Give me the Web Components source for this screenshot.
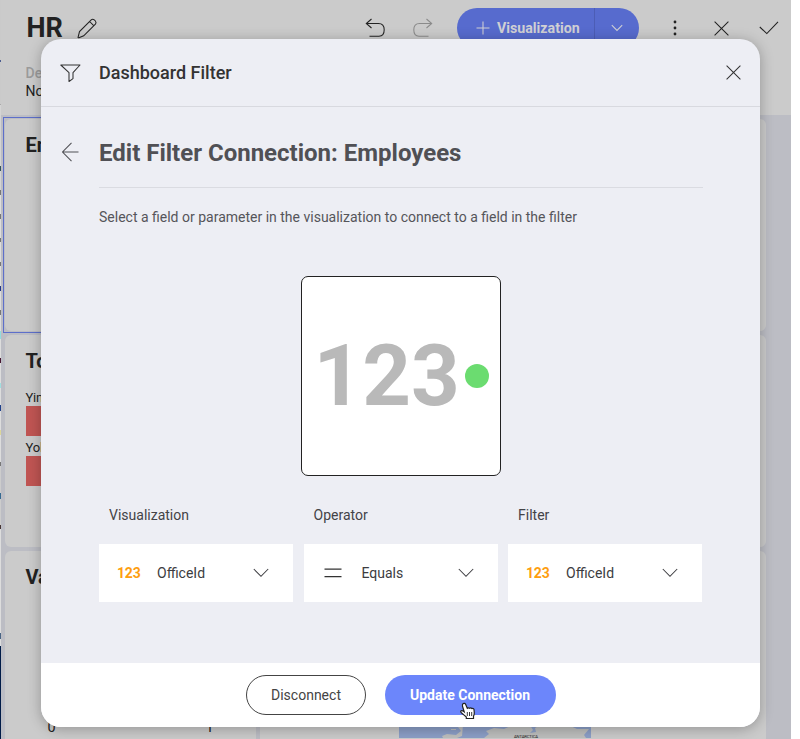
<!DOCTYPE html>
<html lang="en">
<head>
<meta charset="utf-8">
<title>Dashboard Filter</title>
<style>
html,body{margin:0;padding:0;width:800px;height:739px;overflow:hidden;background:#fff;font-family:Roboto,"Liberation Sans",sans-serif}
</style>
</head>
<body>
<hr-app></hr-app>
<script>
const define = (name, html, init) => {
  const t = document.createElement('template');
  t.innerHTML = html;
  customElements.define(name, class extends HTMLElement {
    constructor() {
      super();
      this.attachShadow({mode: 'open'}).append(t.content.cloneNode(true));
    }
    connectedCallback() { if (init) init(this, this.shadowRoot); }
  });
};

// Line icons: [width, height, markup]
const ICONS = {
  pencil: [20, 21, '<path d="M1 19.600 2.500 13.600 14.200 1.800Q15.600.6 17.300 1.900L18.400 3Q19.700 4.600 18.400 6.100L6.700 17.800 2.500 19.500Q1.300 20.100 1 19.600ZM12.600 3.500 16.700 7.700"/>'],
  undo: [21, 20, '<path d="M6.500 1 1.300 5.500 6.500 10M1.300 5.500H13.500Q19.200 5.500 19.200 11.800 19.200 18.200 14 18.200H4.500"/>'],
  redo: [21, 20, '<path d="M14.500 1 19.700 5.500 14.500 10M19.700 5.500H7.500Q1.800 5.500 1.800 11.800 1.800 18.200 7 18.200H16.500"/>'],
  plus: [14, 14, '<path d="M7 .5V13.500M.5 7H13.500"/>'],
  smalldown: [12, 8, '<path d="M.8 1.200 6 6.400 11.200 1.200"/>'],
  down: [16, 10, '<path d="M.8 1 8 8.300 15.200 1"/>'],
  dots: [4, 16, '<g fill="currentColor" stroke="none"><circle cx="2" cy="2" r="1.400"/><circle cx="2" cy="8" r="1.400"/><circle cx="2" cy="14" r="1.400"/></g>'],
  close: [15, 15, '<path d="M.6.6 14.400 14.400M14.400.6.6 14.400"/>'],
  check: [20, 14, '<path d="M.8 6 7.800 12.600 19 .8"/>'],
  funnel: [22, 20, '<path d="M.8 2H20L13 9.600V15.600L9 18.500V9.600Z" stroke-linejoin="round"/>'],
  back: [18, 20, '<path d="M10.500.8 1.500 10 10.500 19.200M1.500 10H17.500"/>'],
  equals: [18, 10, '<path d="M.5 1.200H17.500M.5 8.700H17.500" stroke-width="1.300"/>'],
  hand: [15, 17, '<path d="M4.200 1.600Q5.900.8 6.700 2.500L8.300 6.300Q9.500 5.300 10.700 6.300 11.900 5.500 12.900 6.600 14.500 6 15 7.500L15.300 11Q15.300 12.800 14.500 14.300V16.500H7.300V15Q5 13 3.200 11.500.8 9.600 2.200 8.700 3.200 8.200 5.200 9.800L3.500 4.300Q3.100 2.300 4.200 1.600Z" fill="#fff" stroke="#222" stroke-width="1.200"/><path d="M8.300 10V14M10.500 10V14M12.700 10V14" stroke="#222" stroke-width=".9"/>']
};
define('line-icon', `<style>:host{display:block;flex:none}svg{display:block;overflow:visible}</style>`, (el, root) => {
  const [w, h, body] = ICONS[el.getAttribute('name')];
  root.querySelector('svg')?.remove();
  root.append(document.createRange().createContextualFragment(
    `<svg width="${w}" height="${h}" viewBox="0 0 ${w} ${h}" fill="none" stroke="currentColor" stroke-width="1.050">${body}</svg>`));
});

define('tool-bar', `<style>
:host{display:grid;grid-template-columns:92px 1fr;padding:0 12px 0 25.500px;box-sizing:border-box;background:#cbcbcb;color:#222;height:115px}
.left{padding-top:12px}
.name{display:flex;align-items:center;gap:14px;height:32px}
h1{margin:0;font-size:27px;line-height:32px;font-weight:700}
.desc{margin:20px 0 0 -1px;font-size:14px;line-height:18px;font-weight:500;color:#9b9b9b}
.none{margin-left:-1px;font-size:14px;line-height:19px;color:#222}
.tools{display:flex;justify-content:flex-end;height:56px;align-items:center}
.add{display:flex;align-items:center;height:40px;width:182px;border-radius:20px;background:#576bce;color:#d0d0d4;font-weight:700;font-size:14.200px;margin:0 34px 0 24.500px}
.main{display:flex;align-items:center;width:138px;height:40px;padding-left:19px;box-sizing:border-box;gap:7px;border-right:1px solid #4c5db5}
.drop{flex:1;display:flex;justify-content:center}
.redo{color:#8b8b8b;margin-left:26px}
.x{margin:0 30px 0 37px}
</style>
<div class="left"><div class="name"><h1>HR</h1><line-icon name="pencil"></line-icon></div>
<div class="desc">De</div><div class="none">No</div></div>
<div class="tools"><line-icon name="undo"></line-icon><line-icon class="redo" name="redo"></line-icon>
<div class="add"><div class="main"><line-icon name="plus"></line-icon><span>Visualization</span></div><div class="drop"><line-icon name="smalldown"></line-icon></div></div>
<line-icon name="dots"></line-icon><line-icon class="x" name="close"></line-icon><line-icon name="check"></line-icon></div>`);

define('widget-card', `<style>
:host{display:block;background:#cbcbcb;border-radius:6px;box-sizing:border-box;padding:14px 0 0 20.500px;color:#222;min-width:0;overflow:hidden}
:host([selected]){position:relative;overflow:visible}
:host([selected])::after{content:"";position:absolute;left:-2px;top:-2px;bottom:-2px;width:600px;box-sizing:border-box;border:1px solid #5d6fca}
h2{margin:0;font-size:20px;line-height:24px;font-weight:700}
</style><h2></h2><slot></slot>`, (el, root) => { root.querySelector('h2').textContent = el.getAttribute('label') || ''; });

define('bar-row', `<style>
:host{display:block;font-size:13px;line-height:24px;height:50px;color:#222;letter-spacing:-.2px}
.text{height:20px}
.bar{height:30px;width:60px;margin-left:.5px;background:#c05553}
</style><div class="text"><slot></slot></div><div class="bar"></div>`);

define('dash-board', `<style>
:host{display:grid;grid-template:212px 212px 200px / 251px 506px;gap:4px;padding:4px 0 0 4px;background:#bcbdc4;height:624px;box-sizing:border-box}
.wide{grid-column:1/3}
.bars{padding-top:13px}
.nums{display:flex;padding:129px 0 0 22px;font-size:14.500px;line-height:20px}
.nums span{flex:none;width:158px}
.map{padding:0}
.map svg{display:block;margin:148px 0 0 139px}
</style>
<widget-card class="wide" label="En" selected></widget-card>
<widget-card class="wide" label="To"><div class="bars"><bar-row>Yin</bar-row><bar-row>Yol</bar-row></div></widget-card>
<widget-card label="Va"><div class="nums"><span>0</span><span>1</span></div></widget-card>
<widget-card class="map"><svg width="192" height="39" viewBox="0 0 192 39"><path fill="#8c9fc7" d="M0 0H192V39H0Z"/>
<path fill="#bebfbe" d="M43 37 48 35 57 36 62 32 59 28 64 26 63 37 58 39H44ZM52 30H57V31H52ZM85 39 90 35 87 32 95 29 105 30 114 26 131 26 134 31 131 34 137 33 136 29 145 24H165L178 30 190 30 185 36 187 39Z"/>
<text x="115" y="38.500" font-size="4.200" font-family="Roboto" textLength="24" fill="#222">ANTARCTICA</text></svg></widget-card>`);

define('pill-button', `<style>
:host{display:flex;align-items:center;justify-content:center;height:40px;width:120px;box-sizing:border-box;border-radius:20px;border:1px solid #444;font-size:14px;color:#444;position:relative;padding-top:1px}
:host([primary]){width:171px;background:#6c86fb;border:0;color:#fff;font-weight:700;padding-right:1px}
</style><slot></slot>`);

define('pick-field', `<style>
:host{display:grid;grid-template-rows:49px 58px}
.label{font-size:14px;line-height:20px;padding:10px 0 0 10px;color:#434347}
.box{background:#fff;display:grid;grid-template-columns:58px 1fr auto;align-items:center;padding-right:24px;color:#3c3c40;font-size:14px}
.mark{padding-left:18px;font-weight:700;color:#fe9e10;letter-spacing:-.2px}
.mark line-icon{color:#333;margin-left:2px}
</style><div class="label"></div><div class="box"><div class="mark"></div><slot></slot><line-icon name="down"></line-icon></div>`,
(el, root) => {
  root.querySelector('.label').textContent = el.getAttribute('label');
  root.querySelector('.mark').innerHTML = el.hasAttribute('equals') ? '<line-icon name="equals"></line-icon>' : '123';
});

define('type-preview', `<style>
:host{display:flex;align-items:center;width:200px;height:200px;box-sizing:border-box;border:1px solid #222;border-radius:7px;background:#fff;padding-left:12px}
span{font-size:85px;line-height:100px;font-weight:700;color:#b9b9b9;width:151px}
i{display:block;width:24px;height:24px;border-radius:50%;background:#6bdc70}
</style><span>123</span><i></i>`);

define('filter-dialog', `<style>
:host{display:grid;grid-template-rows:68px 1fr 64.500px;background:#edeef4;border-radius:20px;overflow:hidden;box-shadow:0 2px 14px rgba(0,0,0,.28);color:#333}
header{display:grid;grid-template-columns:58px 1fr auto;align-items:center;border-bottom:1px solid #d8d9df;padding:0 19px 0 0;box-sizing:border-box}
header line-icon,.head line-icon{justify-self:start;margin-left:19px}
header b{font-size:18px;font-weight:500}
main{display:flex;flex-direction:column}
.head{display:grid;grid-template-columns:58px 1fr;align-items:center;height:30px;padding-top:30px;color:#505055}
.head line-icon{margin-left:19.500px}
h2{margin:1px 0 -1px;font-size:24px;font-weight:700;line-height:30px}
.inner{margin:20px 57px 0 58px;border-top:1px solid #dadbe1;flex:1;display:flex;flex-direction:column}
p{margin:19px 0 0;font-size:14px;line-height:20px;color:#55555a}
type-preview{margin:49px 0 0 201.500px}
.fields{display:grid;grid-template-columns:194px 194px 194px;gap:10.500px;margin-top:19px}
footer{background:#fff;display:flex;align-items:center;gap:19px;padding-left:205px}
.hand{position:absolute;left:74px;top:27.500px}
</style>
<header><line-icon name="funnel"></line-icon><b>Dashboard Filter</b><line-icon name="close"></line-icon></header>
<main><div class="head"><line-icon name="back"></line-icon><h2>Edit Filter Connection: Employees</h2></div>
<div class="inner"><p>Select a field or parameter in the visualization to connect to a field in the filter</p>
<type-preview></type-preview>
<div class="fields"><pick-field label="Visualization">OfficeId</pick-field><pick-field label="Operator" equals>Equals</pick-field><pick-field label="Filter">OfficeId</pick-field></div></div></main>
<footer><pill-button>Disconnect</pill-button><pill-button primary>Update Connection<line-icon class="hand" name="hand"></line-icon></pill-button></footer>`);

define('hr-app', `<style>
:host{display:grid;grid-template-columns:1px 790px;width:791px;height:739px;position:relative;overflow:hidden}
.edge{background:linear-gradient(#cacaca 0 60px,#4c5d90 60px 62px,#cacaca 62px 104px,#aaa 104px 105px,#d4d4d4 105px 166px,#35545c 166px 171px,#d4d4d4 171px 190px,#777 190px 195px,#ddd 195px 214px,#777 214px 219px,#ddd 219px 238px,#777 238px 242px,#ddd 242px 262px,#777 262px 266px,#ddd 266px 286px,#273886 286px 291px,#ddd 291px 310px,#777 310px 315px,#ddd 315px 331px,#92dddd 331px 339px,#ddd 339px 358px,#471631 358px 363px,#ddd 363px 383px,#a0dfdf 383px 388px,#ddd 388px 405px,#20418a 405px 411px,#ddd 411px 430px,#ddd799 430px 435px,#ddd 435px 462px,#777 462px 466px,#ccc 466px 493px,#356a91 493px 499px,#ccc 499px 525px,#473635 525px 529px,#ddd 529px 633px,#496484 633px 639px,#ddd 639px 646px,#001b47 646px)}
filter-dialog{position:absolute;left:41px;top:39px;width:719px;height:688px}
</style><div class="edge"></div><div><tool-bar></tool-bar><dash-board></dash-board></div><filter-dialog></filter-dialog>`);
</script>
</body>
</html>
